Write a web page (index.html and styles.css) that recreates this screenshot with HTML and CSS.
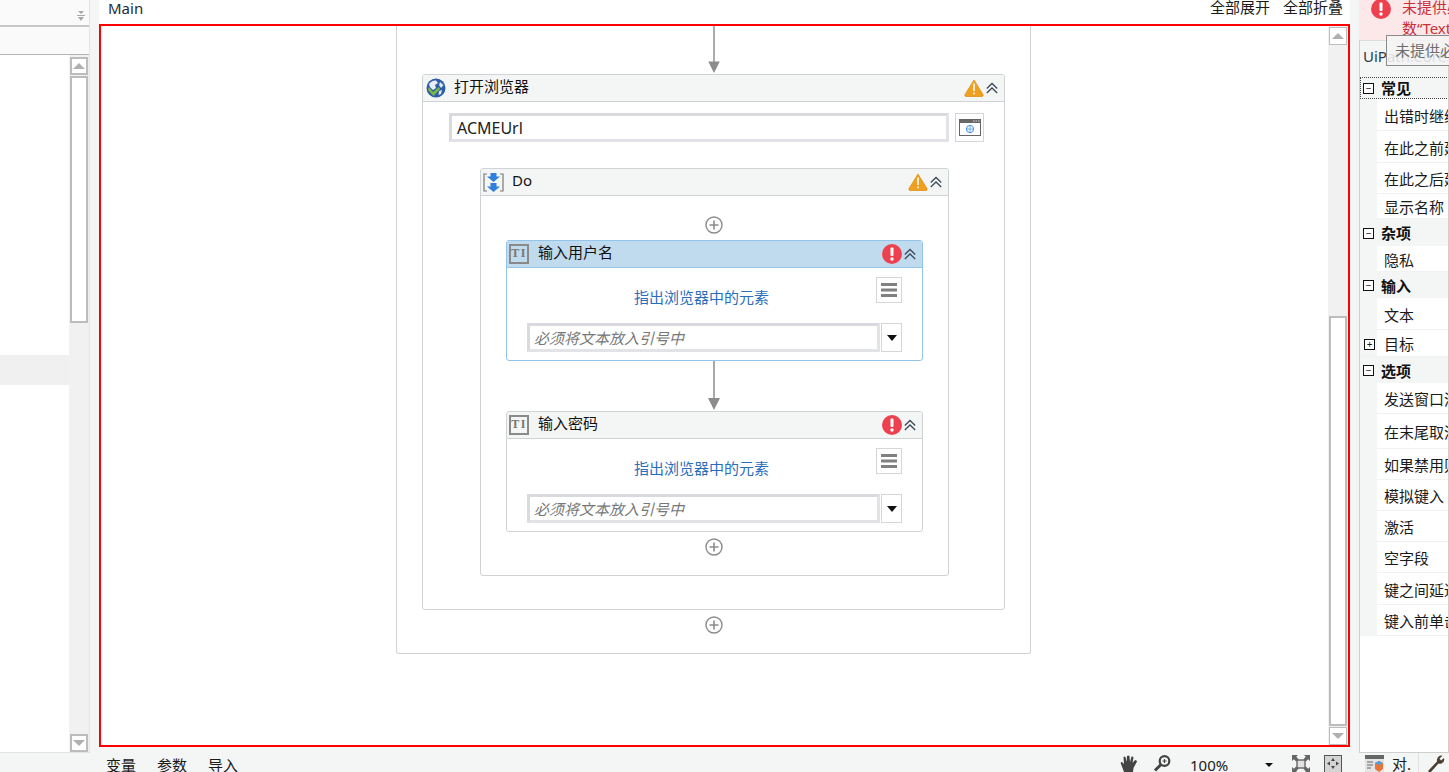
FILE: index.html
```html
<!DOCTYPE html>
<html lang="zh-CN">
<head>
    <meta charset="UTF-8">
    <title>Main</title>
    <link rel="stylesheet" href="styles.css">
</head>
<body>
    <svg class="icon-defs" aria-hidden="true">
        <symbol id="warn" viewBox="0 0 20 18">
            <path d="M10 1 L19 15.5 Q19.6 17.5 18 17.5 L2 17.5 Q.4 17.5 1 15.5 Z" fill="#f0a020" stroke="#e09018" stroke-width=".8"/>
            <rect x="9.2" y="4.5" width="1.6" height="7.5" fill="#fff"/>
            <rect x="9.2" y="13.5" width="1.6" height="1.8" fill="#fff"/>
        </symbol>
        <symbol id="error" viewBox="0 0 20 20">
            <circle cx="10" cy="10" r="10" fill="#ee4150"/>
            <rect x="8.5" y="3.5" width="3" height="8.5" rx="1" fill="#fff"/>
            <circle cx="10" cy="15" r="1.7" fill="#fff"/>
        </symbol>
        <symbol id="chev" viewBox="0 0 12 12">
            <path d="M.8 6.5 L6 1.5 L11.2 6.5 M.8 11 L6 6 L11.2 11" fill="none" stroke="#3c4858" stroke-width="1.3"/>
        </symbol>
        <symbol id="plus" viewBox="0 0 18 18">
            <circle cx="9" cy="9" r="8" fill="#fff" stroke="#8c8c8c" stroke-width="1.4"/>
            <path d="M9 4.5 V13.5 M4.5 9 H13.5" stroke="#8c8c8c" stroke-width="1.6"/>
        </symbol>
        <symbol id="arrow" viewBox="0 0 14 50">
            <path d="M7 0 V40" stroke="#8c8c8c" stroke-width="1.5"/>
            <path d="M1 37 H13 L7 49 Z" fill="#8c8c8c"/>
        </symbol>
        <symbol id="menu" viewBox="0 0 16 16">
            <path d="M0 1 H16 V4 H0 Z M0 6.5 H16 V9.5 H0 Z M0 12 H16 V15 H0 Z" fill="#808080"/>
        </symbol>
    </svg>

    <aside class="left-panel">
        <div class="left-head">
            <svg class="sort-icon" width="8" height="10" viewBox="0 0 8 10"><path d="M1 0 H7 L4 3 Z M0 4 H8 V5 H0 Z M1 6 H7 L4 10 Z" fill="#a8a8a8"/></svg>
        </div>
        <div class="left-sub"></div>
        <div class="left-body">
            <div class="tree">
                <div class="tree-selected"></div>
            </div>
            <div class="scrollbar scrollbar-left">
                <div class="scroll-btn"><span class="tri-up"></span></div>
                <div class="thumb thumb-left"></div>
                <div class="scroll-spacer"></div>
                <div class="scroll-btn"><span class="tri-down"></span></div>
            </div>
        </div>
    </aside>

    <main class="center">
        <div class="topbar">
            <span class="doc-title">Main</span>
            <span class="top-link">全部展开</span>
            <span class="top-link">全部折叠</span>
        </div>

        <div class="frame">
            <div class="canvas">
                <div class="seq-outer">
                    <svg class="arrow arrow-first"><use href="#arrow"/></svg>

                    <section class="activity act-browser">
                        <header class="act-head">
                            <svg class="globe" width="20" height="20" viewBox="0 0 20 20">
                                <circle cx="10" cy="10" r="9.5" fill="#2f5ea6"/>
                                <path d="M3 6 Q6 2 10 2.5 L12 5 L9 7 L10 10 L7 12 L4 9 Z" fill="#e8eef5"/>
                                <path d="M14 4 L17.5 7 L15 10 L13 7 Z M13 13 L16 12 L15 16 L12.5 17 Z" fill="#dfe8f2"/>
                                <path d="M3 9 L7 14 L13 9 L14 11 L7.5 18 L2 12 Z" fill="#79b843"/>
                            </svg>
                            <span class="act-title">打开浏览器</span>
                            <svg class="warn"><use href="#warn"/></svg>
                            <svg class="chev"><use href="#chev"/></svg>
                        </header>
                        <div class="browser-body">
                            <div class="url-row">
                                <div class="text-input url-input">ACMEUrl</div>
                                <button class="square-btn browse-btn">
                                    <svg width="22" height="17" viewBox="0 0 22 17">
                                        <rect x=".5" y=".5" width="21" height="16" fill="#fff" stroke="#666"/>
                                        <rect x="0" y="0" width="22" height="4" fill="#666"/>
                                        <path d="M14 2 H15.5 M16.5 2 H18 M19 2 H20.5" stroke="#ddd"/>
                                        <circle cx="11" cy="10" r="3.6" fill="none" stroke="#3d8ee8"/>
                                        <path d="M7.4 10 H14.6 M11 6.4 V13.6" stroke="#3d8ee8" stroke-width=".7"/>
                                    </svg>
                                </button>
                            </div>

                            <section class="activity act-do">
                                <header class="act-head">
                                    <svg class="do-icon" width="21" height="19" viewBox="0 0 21 19">
                                        <path d="M4 1 H1 V18 H4 M17 1 H20 V18 H17" fill="none" stroke="#777" stroke-width="1.2"/>
                                        <path d="M7.5 0 H13.5 V3.5 H17 L10.5 9 L4 3.5 H7.5 Z M7.5 10 H13.5 V13.5 H17 L10.5 19 L4 13.5 H7.5 Z" fill="#2f80dc"/>
                                    </svg>
                                    <span class="act-title">Do</span>
                                    <svg class="warn"><use href="#warn"/></svg>
                                    <svg class="chev"><use href="#chev"/></svg>
                                </header>
                                <div class="do-body">
                                    <svg class="plus"><use href="#plus"/></svg>

                                    <section class="activity act-type is-selected">
                                        <header class="act-head">
                                            <span class="ti-icon">TI</span>
                                            <span class="act-title">输入用户名</span>
                                            <svg class="err"><use href="#error"/></svg>
                                            <svg class="chev"><use href="#chev"/></svg>
                                        </header>
                                        <div class="type-body">
                                            <div class="target-row">
                                                <a class="target-link">指出浏览器中的元素</a>
                                                <button class="square-btn menu-btn"><svg width="16" height="16"><use href="#menu"/></svg></button>
                                            </div>
                                            <div class="combo-row">
                                                <div class="text-input combo-input">必须将文本放入引号中</div>
                                                <button class="square-btn combo-btn"><span class="tri-black"></span></button>
                                            </div>
                                        </div>
                                    </section>

                                    <svg class="arrow"><use href="#arrow"/></svg>

                                    <section class="activity act-type">
                                        <header class="act-head">
                                            <span class="ti-icon">TI</span>
                                            <span class="act-title">输入密码</span>
                                            <svg class="err"><use href="#error"/></svg>
                                            <svg class="chev"><use href="#chev"/></svg>
                                        </header>
                                        <div class="type-body">
                                            <div class="target-row">
                                                <a class="target-link">指出浏览器中的元素</a>
                                                <button class="square-btn menu-btn"><svg width="16" height="16"><use href="#menu"/></svg></button>
                                            </div>
                                            <div class="combo-row">
                                                <div class="text-input combo-input">必须将文本放入引号中</div>
                                                <button class="square-btn combo-btn"><span class="tri-black"></span></button>
                                            </div>
                                        </div>
                                    </section>

                                    <svg class="plus plus-end"><use href="#plus"/></svg>
                                </div>
                            </section>
                        </div>
                    </section>

                    <svg class="plus plus-end"><use href="#plus"/></svg>
                </div>
            </div>
            <div class="scrollbar scrollbar-main">
                <div class="scroll-btn"><span class="tri-up"></span></div>
                <div class="scroll-spacer"></div>
                <div class="thumb thumb-main"></div>
                <div class="scroll-btn"><span class="tri-down"></span></div>
            </div>
        </div>

        <div class="statusbar">
            <span class="status-tab">变量</span>
            <span class="status-tab">参数</span>
            <span class="status-tab">导入</span>
            <svg class="tool tool-hand" width="18" height="17" viewBox="0 0 18 17">
                <path d="M4 17 L1 9 Q0 7 2 7 L4 9 L3.5 2.5 Q4 1 5.5 2 L6.5 7 L7 1 Q8.5 0 9.5 1 L10 7 L11.5 1.5 Q13 1 13.5 2.5 L12.5 8 L15 5 Q17 5 17 6.5 L13.5 13 L13 17 Z" fill="#444"/>
            </svg>
            <svg class="tool tool-zoom" width="18" height="17" viewBox="0 0 18 17">
                <circle cx="11.5" cy="6" r="4.8" fill="none" stroke="#444" stroke-width="2.2"/>
                <path d="M11.5 4 V8 M9.5 6 H13.5" stroke="#444" stroke-width="1.2"/>
                <path d="M8 9.5 L2 15.5" stroke="#444" stroke-width="3"/>
            </svg>
            <span class="zoom-value">100%</span>
            <span class="tri-black tool-drop"></span>
            <svg class="tool tool-fit" width="18" height="18" viewBox="0 0 18 18">
                <rect x="5" y="5" width="8" height="8" fill="#e2e2e2" stroke="#666" stroke-width="1.4"/>
                <path d="M0 0 H6 L4.2 1.8 L6.6 4.2 L4.2 6.6 L1.8 4.2 L0 6 Z M18 0 V6 L16.2 4.2 L13.8 6.6 L11.4 4.2 L13.8 1.8 L12 0 Z M0 18 V12 L1.8 13.8 L4.2 11.4 L6.6 13.8 L4.2 16.2 L6 18 Z M18 18 H12 L13.8 16.2 L11.4 13.8 L13.8 11.4 L16.2 13.8 L18 12 Z" fill="#666"/>
            </svg>
            <svg class="tool tool-over" width="18" height="18" viewBox="0 0 18 18">
                <rect x=".5" y=".5" width="17" height="17" fill="#d4d4d4" stroke="#555"/>
                <path d="M9 3 L11 6 H7 Z M9 14 L7 11 H11 Z M3 8.5 L6 6.5 V10.5 Z M15 8.5 L12 6.5 V10.5 Z" fill="#444"/>
            </svg>
        </div>
    </main>

    <aside class="right-panel">
        <div class="error-banner">
            <svg class="banner-icon"><use href="#error"/></svg>
            <div class="banner-text">
                <div>未提供必需的活动参</div>
                <div>数“Text”的值。</div>
            </div>
        </div>
        <div class="prop-panel">
            <div class="prop-type">UiPath.Core.Activities.TypeInto</div>
            <div class="props">
                <div class="cat cat-focus"><span class="toggle">−</span>常见</div>
                <div class="prop">出错时继续</div>
                <div class="prop">在此之前延迟</div>
                <div class="prop">在此之后延迟</div>
                <div class="prop">显示名称</div>
                <div class="cat"><span class="toggle">−</span>杂项</div>
                <div class="prop">隐私</div>
                <div class="cat"><span class="toggle">−</span>输入</div>
                <div class="prop">文本</div>
                <div class="prop prop-expand"><span class="toggle">+</span>目标</div>
                <div class="cat"><span class="toggle">−</span>选项</div>
                <div class="prop">发送窗口消息</div>
                <div class="prop">在末尾取消聚焦</div>
                <div class="prop">如果禁用则输入</div>
                <div class="prop">模拟键入</div>
                <div class="prop">激活</div>
                <div class="prop">空字段</div>
                <div class="prop">键之间延迟</div>
                <div class="prop">键入前单击</div>
            </div>
        </div>
        <div class="tooltip">未提供必需的活动参数</div>
        <div class="right-tabs">
            <div class="right-tab">
                <svg width="19" height="17" viewBox="0 0 19 17">
                    <rect x="0" y="0" width="19" height="17" fill="#e4e4e4"/>
                    <rect x="0" y="0" width="19" height="4" fill="#666"/>
                    <path d="M2 7 H8 M2 10 H8 M2 13 H6" stroke="#666"/>
                    <path d="M10 8 L14 6 L18 8 V14 L14 17 L10 14 Z" fill="#e8743b"/>
                    <path d="M10 8 L14 6 L18 8 L14 10 Z" fill="#4a9fdc"/>
                </svg>
                <span>对.</span>
            </div>
            <div class="right-tab">
                <svg width="18" height="18" viewBox="0 0 18 18">
                    <path d="M1 16 L10 6.5 Q9.5 2 13.5 .5 L15.5 .8 L12.5 3.5 L14 5.5 L17 3 Q18 7 14.5 8.5 Q13 9 11.5 8.5 L3 18 Z" fill="#4a3f30"/>
                </svg>
            </div>
        </div>
    </aside>
</body>
</html>
```

FILE: styles.css
```css
* {
    box-sizing: border-box;
}
body {
    margin: 0;
    width: 1449px;
    height: 772px;
    overflow: hidden;
    display: flex;
    gap: 9px;
    background-color: #f4f5f5;
    color: #1a1a1a;
    font-family: "Noto Sans", "Noto Sans CJK SC", sans-serif;
    font-size: 15px;
    line-height: 20px;
}
.icon-defs {
    position: absolute;
    width: 0;
    height: 0;
}
button {
    padding: 0;
    font: inherit;
}

/* left panel */
.left-panel {
    width: 90px;
    height: 753px;
    display: flex;
    flex-direction: column;
    border-right: 1px solid #e4e4e4;
    border-bottom: 1px solid #e2e2e2;
}
.left-head {
    height: 27px;
    flex-shrink: 0;
    background-color: #fafafa;
    border-bottom: 2px solid #c8c8c8;
    display: flex;
    justify-content: flex-end;
    align-items: flex-end;
    padding: 0 4px 4px 0;
}
.left-sub {
    height: 28px;
    flex-shrink: 0;
    background-color: #fafafa;
    border-bottom: 1px solid #b4b4b4;
}
.left-body {
    flex: 1;
    display: flex;
    min-height: 0;
    background-color: #fff;
}
.tree {
    flex: 1;
    padding-top: 300px;
}
.tree-selected {
    height: 30px;
    background-color: #f0f0f0;
}

/* scrollbars */
.scrollbar {
    display: flex;
    flex-direction: column;
    align-items: center;
    background-color: #f1f1f1;
}
.scrollbar-left {
    width: 20px;
    padding: 2px 0 0;
}
.scrollbar-main {
    width: 20px;
    padding: 1px 0 0;
    height: 100%;
}
.scroll-btn {
    width: 18px;
    height: 18px;
    flex-shrink: 0;
    background-color: #fff;
    border: 1px solid #bdbdbd;
    display: flex;
    align-items: center;
    justify-content: center;
}
.scrollbar-left .scroll-btn {
    border-width: 2px;
}
.thumb {
    width: 18px;
    flex-shrink: 0;
    background-color: #fff;
    border: 2px solid #bdbdbd;
}
.thumb-left {
    height: 247px;
    margin-top: 1px;
}
.thumb-main {
    height: 410px;
    margin-bottom: 1px;
}
.scroll-spacer {
    flex: 1;
}
.tri-up, .tri-down {
    width: 0;
    height: 0;
    border-left: 6px solid transparent;
    border-right: 6px solid transparent;
}
.tri-up {
    border-bottom: 6px solid #b0b0b0;
}
.tri-down {
    border-top: 6px solid #b0b0b0;
}
.tri-black {
    display: block;
    width: 0;
    height: 0;
    border-left: 5px solid transparent;
    border-right: 5px solid transparent;
    border-top: 6px solid #111;
}

/* center */
.center {
    width: 1251px;
    display: flex;
    flex-direction: column;
}
.topbar {
    height: 24px;
    flex-shrink: 0;
    padding: 0 7px 0 9px;
    display: flex;
    gap: 13px;
    background-color: #fff;
    line-height: 15px;
}
.doc-title {
    margin-right: auto;
    color: #1f2a38;
    line-height: 17px;
}
.frame {
    height: 723px;
    flex-shrink: 0;
    border: 2px solid #ff0000;
    background-color: #fff;
    display: flex;
    overflow: hidden;
}
.canvas {
    flex: 1;
    min-width: 0;
    padding-left: 295px;
    overflow: hidden;
}
.seq-outer {
    width: 635px;
    height: 628px;
    border: 1px solid #d0d3d6;
    border-top: none;
    border-radius: 0 0 3px 3px;
    display: flex;
    flex-direction: column;
    align-items: center;
}
.arrow {
    width: 14px;
    height: 50px;
    flex-shrink: 0;
}
.arrow-first {
    height: 48px;
}
.do-body .arrow, .do-body .plus {
    margin-left: -2px;
}
.plus {
    width: 18px;
    height: 18px;
    flex-shrink: 0;
}
.plus-end {
    margin-top: 6px;
}

/* activities */
.activity {
    background-color: #fff;
    border: 1px solid #d0d3d6;
    border-radius: 3px;
    flex-shrink: 0;
}
.act-head {
    height: 27px;
    padding: 0 6px 0 3px;
    display: flex;
    align-items: center;
    gap: 8px;
    background-color: #f4f6f6;
    border-bottom: 1px solid #d0d3d6;
    border-radius: 2px 2px 0 0;
}
.act-title {
    flex: 1;
    color: #111;
    margin-top: -5px;
}
.warn {
    width: 20px;
    height: 18px;
}
.err {
    width: 20px;
    height: 20px;
}
.chev {
    width: 12px;
    height: 12px;
    margin-left: -6px;
}
.act-browser {
    width: 583px;
    height: 536px;
}
.browser-body {
    display: flex;
    flex-direction: column;
    padding: 11px 0 0 26px;
}
.url-row {
    display: flex;
    gap: 6px;
    height: 29px;
}
.text-input {
    height: 29px;
    padding: 0 4px;
    border: 3px solid #e2e3e6;
    border-top-color: #d9dadd;
    border-left-color: #d9dadd;
    background-color: #fff;
    line-height: 25px;
    white-space: nowrap;
    overflow: hidden;
}
.url-input {
    width: 500px;
    padding-left: 5px;
    color: #222;
    font-size: 16px;
}
.square-btn {
    background-color: #fff;
    border: 1px solid #d4d6da;
    display: flex;
    align-items: center;
    justify-content: center;
}
.browse-btn {
    width: 29px;
    height: 29px;
}
.act-do {
    width: 469px;
    height: 408px;
    margin: 26px 0 0 31px;
}
.act-do .act-head {
    padding-left: 2px;
}
.do-body {
    display: flex;
    flex-direction: column;
    align-items: center;
    padding-top: 20px;
}
.act-type {
    width: 417px;
    height: 121px;
    margin-top: 6px;
}
.arrow + .act-type {
    margin-top: 0;
}
.is-selected {
    border-color: #92c5e9;
}
.is-selected .act-head {
    background-color: #c0dbee;
    border-bottom-color: #92c5e9;
}
.act-type .act-title {
    margin-left: 1px;
}
.ti-icon {
    width: 20px;
    height: 20px;
    border: 2px solid #8a8a8a;
    font-family: "Liberation Serif", serif;
    font-weight: bold;
    font-size: 12px;
    line-height: 15px;
    text-align: center;
    color: #777;
    letter-spacing: 1.5px;
}
.type-body {
    padding: 9px 20px 0;
}
.target-row {
    display: flex;
    align-items: flex-start;
    height: 26px;
}
.target-link {
    margin: 10px auto 0 107px;
    color: #2a6ebb;
}
.menu-btn {
    width: 26px;
    height: 26px;
}
.combo-row {
    display: flex;
    margin-top: 20px;
    gap: 1px;
}
.combo-input {
    width: 353px;
    color: #777;
    font-style: italic;
}
.combo-btn {
    width: 21px;
    height: 29px;
}

/* status bar */
.statusbar {
    flex: 1;
    display: flex;
    align-items: flex-start;
    padding: 9px 8px 0 7px;
    gap: 21px;
    overflow: hidden;
    line-height: 18px;
}
.tool {
    flex-shrink: 0;
    margin-top: -1px;
}
.tool-hand {
    margin-left: auto;
}
.tool-zoom {
    margin-left: -6px;
}
.zoom-value {
    margin-left: -2px;
    width: 38px;
    flex-shrink: 0;
}
.tool-drop {
    margin: 7px 0 0 16px;
    border-left-width: 4px;
    border-right-width: 4px;
    border-top-width: 4px;
}
.tool-fit {
    margin-left: -2px;
}
.tool-over {
    margin-left: -7px;
}

/* right panel */
.right-panel {
    position: relative;
    width: 90px;
    display: flex;
    flex-direction: column;
    overflow: hidden;
}
.error-banner {
    height: 40px;
    flex-shrink: 0;
    background-color: #fde8e9;
    padding-left: 12px;
    display: flex;
    gap: 11px;
    overflow: hidden;
}
.banner-icon {
    width: 20px;
    height: 20px;
    margin-top: -1px;
    flex-shrink: 0;
}
.banner-text {
    color: #c8303c;
    white-space: nowrap;
    line-height: 21px;
    margin-top: -3px;
}
.prop-panel {
    height: 713px;
    flex-shrink: 0;
    background-color: #fff;
    border: 1px solid #cfcfcf;
    border-top-color: #dcdcdc;
    overflow: hidden;
}
.prop-type {
    height: 36px;
    padding: 5px 0 0 3px;
    background-color: #f4f6f6;
    color: #2c3a4a;
    white-space: nowrap;
    line-height: 20px;
}
.props {
    display: grid;
    grid-template-rows: 22px 32px 32px 31px 25px 27px 26px 26px 32px 27px 26px 31px 35px 31px 31px 31px 31px 32px 31px;
    background-color: #f4f6f6;
    white-space: nowrap;
}
.cat {
    display: flex;
    align-items: center;
    font-weight: 700;
    color: #111;
    padding: 1px 0 0 3px;
}
.cat-focus {
    padding-top: 0;
    outline: 1px dotted #444;
    outline-offset: -1px;
}
.toggle {
    width: 11px;
    height: 11px;
    flex-shrink: 0;
    margin-right: 7px;
    border: 1px solid #111;
    font-size: 10px;
    font-weight: 400;
    line-height: 8px;
    text-align: center;
    background-color: #fff;
}
.prop {
    display: flex;
    align-items: center;
    margin-left: 17px;
    padding: 2px 0 0 7px;
    background-color: #fff;
    border-bottom: 1px solid #f1f2f2;
}
.prop-expand {
    margin-left: 0;
    padding-left: 4px;
    background: linear-gradient(to right, #f4f6f6 17px, #fff 17px);
}
.prop-expand .toggle {
    margin-right: 9px;
}
.tooltip {
    position: absolute;
    top: 35px;
    left: 27px;
    width: 120px;
    height: 31px;
    padding-left: 8px;
    background-color: rgba(244, 244, 244, 0.88);
    border: 1px solid #8a8a8a;
    color: #6e6e6e;
    line-height: 29px;
    white-space: nowrap;
}
.right-tabs {
    flex: 1;
    display: flex;
    align-items: flex-start;
    padding-left: 6px;
}
.right-tab {
    display: flex;
    gap: 8px;
    line-height: 18px;
    padding-top: 2px;
    height: 19px;
}
.right-tab + .right-tab {
    margin-left: 7px;
    padding-left: 8px;
    border-left: 1px solid #e0e0e0;
}
```
